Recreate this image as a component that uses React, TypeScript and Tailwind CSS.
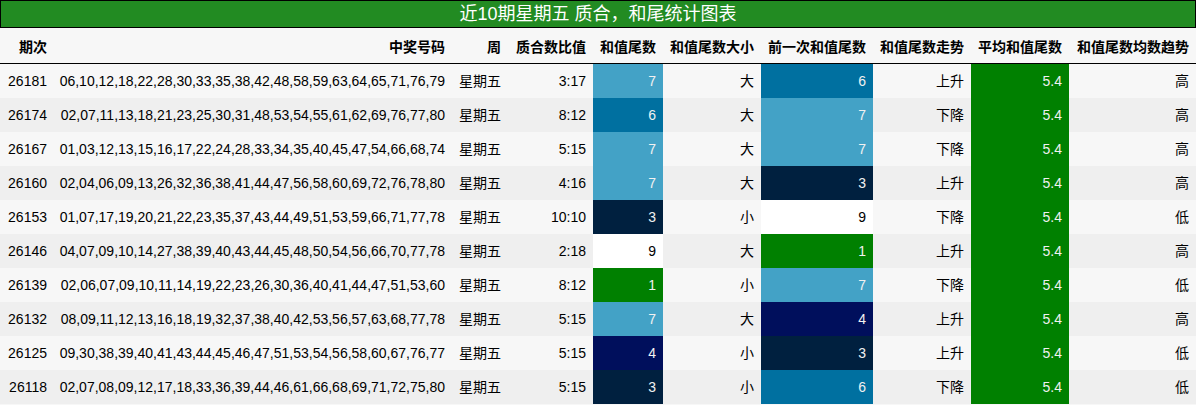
const rows: [string, string, string, number, string, number, string, string][] = [
  ['26181', '06,10,12,18,22,28,30,33,35,38,42,48,58,59,63,64,65,71,76,79', '3:17', 7, '大', 6, '上升', '高'],
  ['26174', '02,07,11,13,18,21,23,25,30,31,48,53,54,55,61,62,69,76,77,80', '8:12', 6, '大', 7, '下降', '高'],
  ['26167', '01,03,12,13,15,16,17,22,24,28,33,34,35,40,45,47,54,66,68,74', '5:15', 7, '大', 7, '下降', '高'],
  ['26160', '02,04,06,09,13,26,32,36,38,41,44,47,56,58,60,69,72,76,78,80', '4:16', 7, '大', 3, '上升', '高'],
  ['26153', '01,07,17,19,20,21,22,23,35,37,43,44,49,51,53,59,66,71,77,78', '10:10', 3, '小', 9, '下降', '低'],
  ['26146', '04,07,09,10,14,27,38,39,40,43,44,45,48,50,54,56,66,70,77,78', '2:18', 9, '大', 1, '上升', '高'],
  ['26139', '02,06,07,09,10,11,14,19,22,23,26,30,36,40,41,44,47,51,53,60', '8:12', 1, '小', 7, '下降', '低'],
  ['26132', '08,09,11,12,13,16,18,19,32,37,38,40,42,53,56,57,63,68,77,78', '5:15', 7, '大', 4, '上升', '高'],
  ['26125', '09,30,38,39,40,41,43,44,45,46,47,51,53,54,56,58,60,67,76,77', '5:15', 4, '小', 3, '上升', '低'],
  ['26118', '02,07,08,09,12,17,18,33,36,39,44,46,61,66,68,69,71,72,75,80', '5:15', 3, '小', 6, '下降', '低'],
]

const headers = ['期次', '中奖号码', '周', '质合数比值', '和值尾数', '和值尾数大小', '前一次和值尾数', '和值尾数走势', '平均和值尾数', '和值尾数均数趋势']

// tail digit -> cell colour
const tailColor: Record<number, string> = {
  1: 'bg-[#008000] text-[#f1f1f1]',
  3: 'bg-[#00203f] text-[#f1f1f1]',
  4: 'bg-[#000f5c] text-[#f1f1f1]',
  6: 'bg-[#0070a0] text-[#f1f1f1]',
  7: 'bg-[#43a2c6] text-[#f1f1f1]',
  9: 'bg-white text-black',
}

const grid = 'grid grid-cols-[54px_398px_56px_85px_70px_98px_112px_98px_98px_127px]'

export default function App() {
  return (
    <div
      className="w-[1196px] h-[405px] overflow-hidden bg-[#f7f7f7] text-[14px] text-black"
      style={{ fontFamily: '"Liberation Sans", "Noto Sans CJK SC", sans-serif' }}
    >
      <div className="h-[28px] border border-black bg-[#228b22] flex items-center justify-center text-[18px] text-white leading-none">
        近10期星期五 质合，和尾统计图表
      </div>
      <div className={`${grid} h-[36px] border-b border-black font-bold`}>
        {headers.map((h) => (
          <div key={h} className="flex items-center justify-end px-[7px] pt-[3px] whitespace-nowrap">
            {h}
          </div>
        ))}
      </div>
      {rows.map((r, i) => (
        <div key={r[0]} className={`${grid} h-[34px] ${i % 2 === 0 ? 'bg-[#f7f7f7]' : 'bg-[#efefef]'}`}>
          <div className="flex items-center justify-end px-[7px]">{r[0]}</div>
          <div className="flex items-center justify-end px-[7px] whitespace-nowrap">{r[1]}</div>
          <div className="flex items-center justify-end px-[7px]">星期五</div>
          <div className="flex items-center justify-end px-[7px]">{r[2]}</div>
          <div className={`flex items-center justify-end px-[7px] ${tailColor[r[3]]}`}>{r[3]}</div>
          <div className="flex items-center justify-end px-[7px]">{r[4]}</div>
          <div className={`flex items-center justify-end px-[7px] ${tailColor[r[5]]}`}>{r[5]}</div>
          <div className="flex items-center justify-end px-[7px]">{r[6]}</div>
          <div className="flex items-center justify-end px-[7px] bg-[#008000] text-[#f1f1f1]">5.4</div>
          <div className="flex items-center justify-end px-[7px]">{r[7]}</div>
        </div>
      ))}
    </div>
  )
}
